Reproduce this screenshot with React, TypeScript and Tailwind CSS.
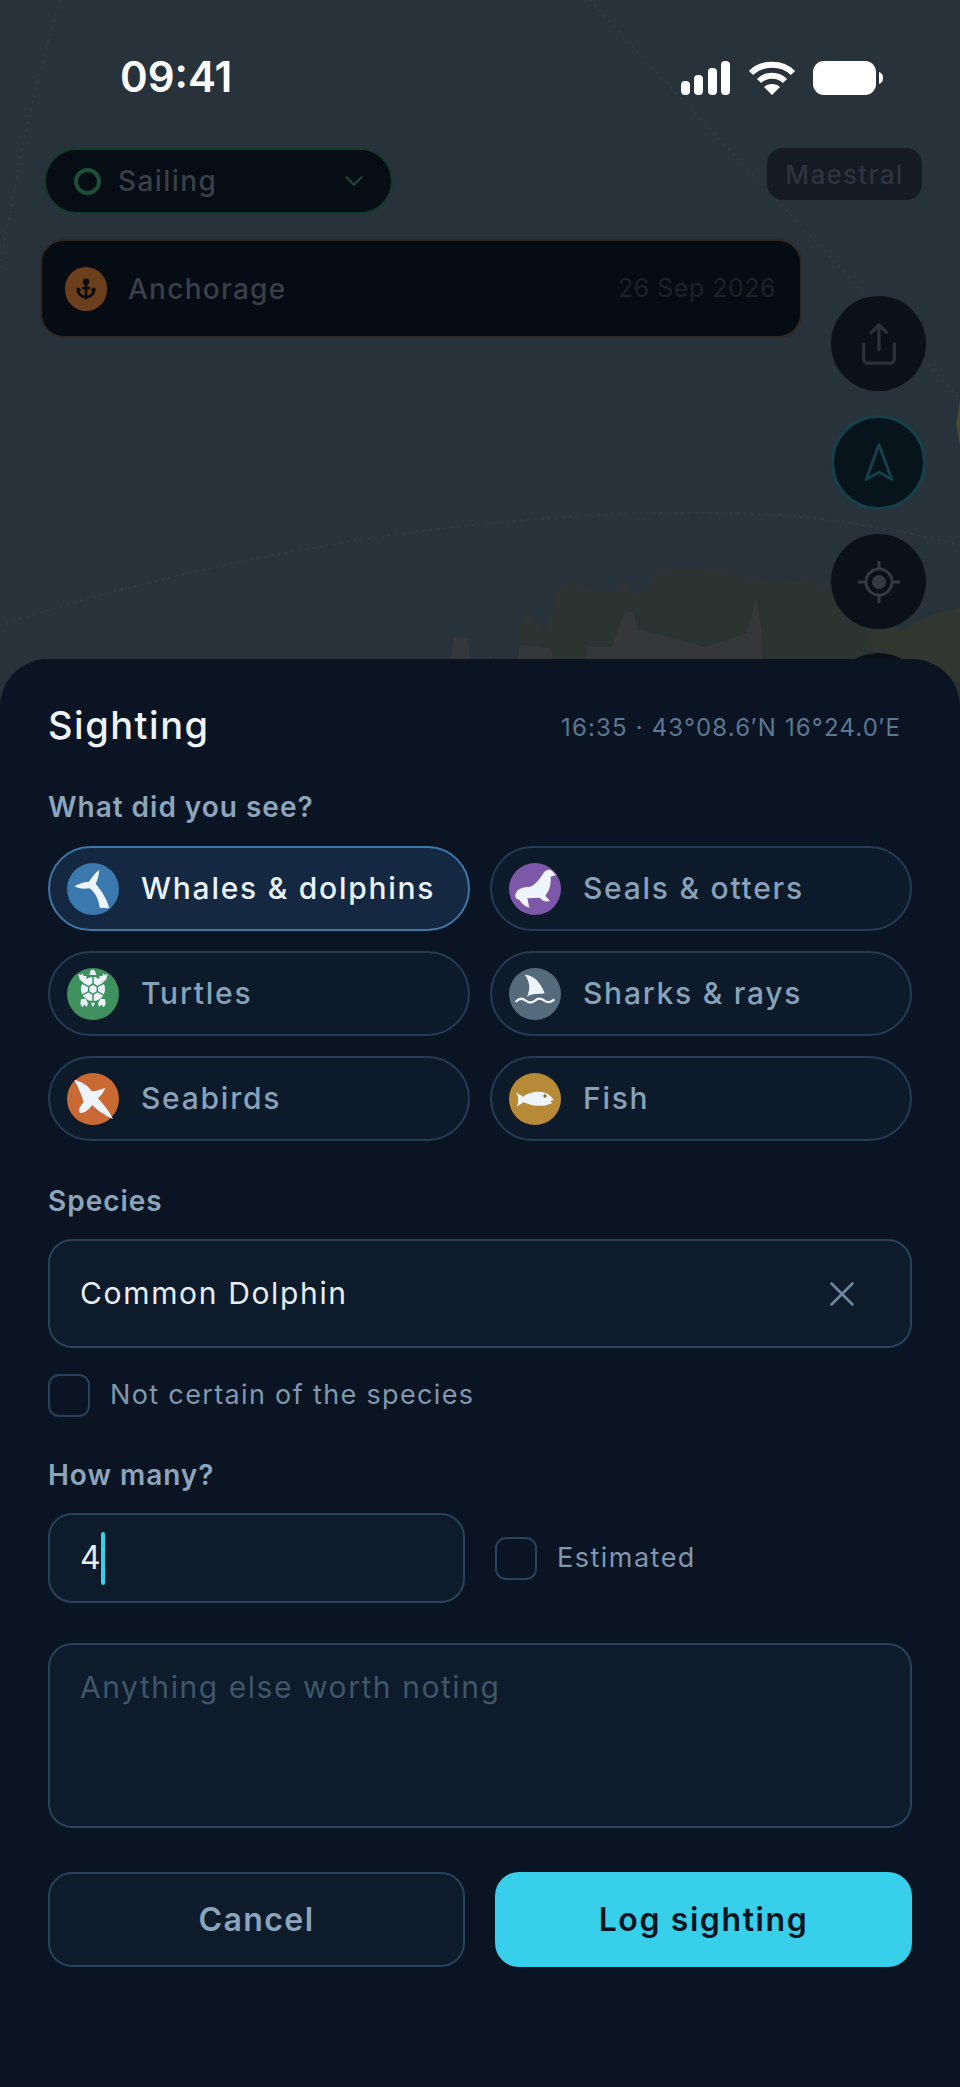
import React from 'react';
import { Anchor, ChevronDown, Navigation2, Share, X } from 'lucide-react';

const IconDisc = ({ color, cx, cy, children }: { color: string; cx: number; cy: number; children: React.ReactNode }) => (
	<svg className="h-[54px] w-[54px] shrink-0" viewBox={`${cx - 81} ${cy - 81} 162 162`}>
		<circle cx={cx} cy={cy} r={78} fill={color} />
		{children}
	</svg>
);

const WHITE = '#edf4fb';

const WhaleIcon = () => (
	<IconDisc color="#3a78ad" cx={128} cy={130}>
		<path
			fill={WHITE}
			d="M72 122C90 112 105 108 116 108C122 98 132 84 147 72C146 88 142 102 136 114C150 130 170 158 177 188L148 186C146 165 135 140 118 128C102 130 85 130 72 122Z"
		/>
	</IconDisc>
);

const SealIcon = () => (
	<IconDisc color="#7d58a8" cx={119} cy={130}>
		<path
			fill={WHITE}
			d="M60 148C62 132 80 124 102 124C122 118 134 98 146 80C154 70 166 70 172 78L182 88L166 93C168 115 162 135 150 150L164 166C150 170 140 165 134 156L96 158L102 186C88 182 78 172 72 162C64 162 59 156 60 148Z"
		/>
	</IconDisc>
);

const TurtleIcon = () => (
	<IconDisc color="#3f9160" cx={128} cy={130}>
		<g fill={WHITE}>
			<path d="M117 73L120 62C123 56 131 56 134 62L138 73Z" />
			<path d="M84 69L92 74L96 68L100 76L108 76L109 88L97 94L88 86Z" />
			<path d="M172 69L164 74L160 68L156 76L148 76L147 88L159 94L168 86Z" />
			<path d="M92 146L106 144L113 158L110 168L102 162L96 170L90 160Z" />
			<path d="M164 146L150 144L143 158L146 168L154 162L160 170L166 160Z" />
			<path d="M122 156L134 156L128 170Z" />
			<circle cx={128} cy={115} r={36} />
		</g>
		<g fill="none" stroke="#3f9160" strokeWidth={4.5}>
			<path d="M128 100L141 108L141 123L128 131L115 123L115 108Z" />
			<path d="M128 100L128 78M141 108L162 97M141 123L162 134M128 131L128 152M115 123L94 134M115 108L94 97" />
		</g>
	</IconDisc>
);

const SharkIcon = () => (
	<IconDisc color="#566a7e" cx={119} cy={130}>
		<path fill={WHITE} d="M88 72C110 72 135 90 148 128C135 132 118 126 95 138C105 115 105 95 88 72Z" />
		<path
			fill="none"
			stroke={WHITE}
			strokeWidth={7}
			strokeLinecap="round"
			d="M63 152C72 142 82 142 91 150C100 157 110 157 119 150C128 142 138 142 147 150C156 157 166 155 175 148"
		/>
	</IconDisc>
);

const SeabirdIcon = () => (
	<IconDisc color="#c96a35" cx={128} cy={115}>
		<path
			fill={WHITE}
			d="M72 58C92 62 112 72 124 92C136 92 150 86 165 82C160 95 152 104 143 113C158 130 176 150 188 175C166 166 142 150 126 133C118 144 104 158 90 157C82 152 86 140 100 124C94 104 84 80 72 58Z"
		/>
	</IconDisc>
);

const FishIcon = () => (
	<IconDisc color="#b68a36" cx={120} cy={115}>
		<path
			fill={WHITE}
			d="M62 95L85 108C100 95 130 90 150 96C162 100 172 110 176 118L165 122L172 126C160 135 125 140 100 130L85 125L65 138C72 125 72 110 62 95Z"
		/>
		<circle cx={150} cy={106} r={5} fill="#8a6a28" />
	</IconDisc>
);

const categories = [
	{ label: 'Whales & dolphins', icon: <WhaleIcon />, active: true },
	{ label: 'Seals & otters', icon: <SealIcon /> },
	{ label: 'Turtles', icon: <TurtleIcon /> },
	{ label: 'Sharks & rays', icon: <SharkIcon /> },
	{ label: 'Seabirds', icon: <SeabirdIcon /> },
	{ label: 'Fish', icon: <FishIcon /> },
];

const CategoryChip = ({ label, icon, active }: { label: string; icon: React.ReactNode; active?: boolean }) => (
	<div
		className={`flex h-[85px] items-center gap-[21px] rounded-full border-2 pl-[16px] text-[30px] font-medium tracking-[0.058em] ${
			active ? 'border-[#3d78a9] bg-[#142842] text-[#eaf2fa]' : 'border-[#263c52] bg-[#0d1a29] text-[#86a2bb]'
		}`}
	>
		{icon}
		<span>{label}</span>
	</div>
);

const Checkbox = () => <div className="h-[43px] w-[42px] shrink-0 rounded-[11px] border-2 border-[#2a4157]" />;

const FieldLabel = ({ children }: { children: React.ReactNode }) => (
	<div className="text-[28px] leading-[34px] font-semibold tracking-[0.035em] text-[#8ba5bc]">{children}</div>
);

const StatusBar = () => (
	<div className="flex h-[148px] items-start justify-between pt-[52px] pr-[77px] pl-[120px]">
		<span className="text-[42px] leading-[50px] font-semibold text-white">09:41</span>
		<div className="flex items-center gap-[17px] pt-[8px]">
			<svg width="50" height="34" viewBox="0 0 50 34" fill="white">
				<rect x="0" y="20" width="9" height="14" rx="4" />
				<rect x="13" y="14" width="9" height="20" rx="4" />
				<rect x="27" y="7" width="9" height="27" rx="4" />
				<rect x="40" y="0" width="9" height="34" rx="4" />
			</svg>
			<svg width="48" height="36" viewBox="0 0 48 36" fill="none" stroke="white" strokeWidth="6">
				<path d="M3 13C14 2 34 2 45 13" />
				<path d="M11 21C18 14 30 14 37 21" />
				<path d="M24 35L16 27C20 23 28 23 32 27Z" fill="white" stroke="none" />
			</svg>
			<svg width="70" height="34" viewBox="0 0 70 34" fill="white">
				<rect x="0" y="0" width="63" height="34" rx="11" />
				<path d="M66 11C69 12 70 14 70 17C70 20 69 22 66 23Z" />
			</svg>
		</div>
	</div>
);

const MapBackdrop = () => (
	<svg className="absolute inset-0 h-full w-full" viewBox="0 0 960 707">
		<g fill="none" stroke="#2f3a44" strokeWidth="2" strokeDasharray="2 5">
			<path d="M0 625C200 560 500 500 780 515C850 520 920 535 960 545" />
			<path d="M590 0C680 100 800 220 960 400" />
			<path d="M60 0C30 100 15 180 0 270" />
		</g>
		<path
			fill="#2c3431"
			d="M512 707L520 627L527 610L545 630L557 590L570 582L588 590L612 593L625 582L637 597L661 570L686 567L716 570L753 580L772 583L808 580L824 590L860 600L900 630L937 613L960 607L960 707Z"
		/>
		<path fill="#323630" d="M860 600L900 630L937 613L960 607L960 680L880 680Z" />
		<path
			fill="#35373b"
			d="M447 707L453 637L468 638L475 707ZM488 707L490 650L497 707ZM514 707L520 645L551 648L560 707ZM582 707L588 647L612 647L625 610L634 613L637 630L655 633L704 647L747 633L756 597L762 633L759 707Z"
		/>
		<path fill="#4a4a2e" d="M956 425L960 400L960 445Z" />
	</svg>
);

const RailButton = ({ children, ring }: { children: React.ReactNode; ring?: boolean }) => (
	<div
		className={`flex h-[95px] w-[95px] items-center justify-center rounded-full ${
			ring ? 'border-[3px] border-[#14404a] bg-[#08141c]' : 'bg-[#0a1119]'
		}`}
	>
		{children}
	</div>
);

const MapLayer = () => (
	<div className="relative h-[707px] overflow-hidden bg-[#28323b]">
		<MapBackdrop />
		<div className="relative">
			<StatusBar />
			<div className="flex items-start justify-between pr-[38px] pl-[44px]">
				<div className="flex h-[66px] w-[349px] items-center rounded-full border-2 border-[#143a2c] bg-[#060d14] pr-[22px] pl-[28px] text-[28px] font-medium tracking-[0.05em] text-[#3a3f48]">
					<div className="h-[27px] w-[27px] rounded-full border-[4px] border-[#1c5039]" />
					<span className="ml-[17px] flex-1">Sailing</span>
					<ChevronDown className="text-[#1c4a3a]" size={30} strokeWidth={1.7} />
				</div>
				<div className="flex h-[52px] w-[155px] items-center justify-center rounded-[16px] bg-[#151b25] text-[26px] font-medium tracking-[0.05em] text-[#2e343f]">
					Maestral
				</div>
			</div>
			<div className="mt-[25px] ml-[40px] flex h-[99px] w-[762px] items-center rounded-[24px] border-2 border-[#322825] bg-[#050c13] pr-[24px] pl-[23px]">
				<div className="flex h-[44px] w-[42px] items-center justify-center rounded-full bg-[#6b3f1c]">
					<Anchor className="text-[#0a0c10]" size={22} strokeWidth={3} />
				</div>
				<span className="ml-[21px] flex-1 text-[28px] font-medium tracking-[0.045em] text-[#3a3f48]">Anchorage</span>
				<span className="text-[25px] tracking-[0.02em] text-[#1c212b]">26 Sep 2026</span>
			</div>
		</div>
		<div className="absolute top-[296px] left-[831px] flex flex-col gap-[24px]">
			<RailButton>
				<Share className="text-[#2a313b]" size={46} strokeWidth={1.7} />
			</RailButton>
			<RailButton ring>
				<Navigation2 className="text-[#14404a]" size={44} strokeWidth={1.6} />
			</RailButton>
			<RailButton>
				<svg width="42" height="42" viewBox="0 0 42 42" fill="none" stroke="#343a44" strokeWidth="3">
					<circle cx="21" cy="21" r="13" />
					<circle cx="21" cy="21" r="7" fill="#343a44" stroke="none" />
					<path d="M21 0V8M21 34V42M0 21H8M34 21H42" />
				</svg>
			</RailButton>
			<RailButton>{null}</RailButton>
		</div>
	</div>
);

const Sheet = () => (
	<div className="relative z-10 -mt-[48px] h-[1428px] rounded-t-[48px] bg-[#0b1422] px-[48px] pt-[44px]">
		<div className="flex items-center justify-between pr-[11px]">
			<h1 className="text-[38px] leading-[44px] font-medium tracking-[0.04em] text-[#eef4fa]">Sighting</h1>
			<span className="mt-[6px] text-[24px] tracking-[0.048em] text-[#5b7792]">16:35 · 43°08.6′N 16°24.0′E</span>
		</div>
		<div className="mt-[43px]">
			<FieldLabel>What did you see?</FieldLabel>
		</div>
		<div className="mt-[22px] grid grid-cols-2 gap-x-[20px] gap-y-[20px]">
			{categories.map(c => (
				<CategoryChip key={c.label} label={c.label} icon={c.icon} active={c.active} />
			))}
		</div>
		<div className="mt-[43px]">
			<FieldLabel>Species</FieldLabel>
		</div>
		<div className="mt-[21px] flex h-[109px] items-center justify-between rounded-[24px] border-2 border-[#2a4258] bg-[#0d1b2a] pr-[47px] pl-[30px]">
			<span className="text-[30px] tracking-[0.055em] text-[#e6eef6]">Common Dolphin</span>
			<X className="text-[#6a86a0]" size={42} strokeWidth={1.5} />
		</div>
		<div className="mt-[26px] flex items-center gap-[20px]">
			<Checkbox />
			<span className="text-[27px] tracking-[0.05em] text-[#8097ad]">Not certain of the species</span>
		</div>
		<div className="mt-[41px]">
			<FieldLabel>How many?</FieldLabel>
		</div>
		<div className="mt-[21px] grid grid-cols-2 gap-x-[30px]">
			<div className="flex h-[90px] items-center rounded-[24px] border-2 border-[#2a4258] bg-[#0d1b2a] pl-[30px]">
				<span className="text-[32px] text-[#e6eef6]">4</span>
				<div className="h-[53px] w-[4px] rounded-full bg-[#37cfe9]" />
			</div>
			<div className="flex items-center gap-[20px]">
				<Checkbox />
				<span className="text-[27px] tracking-[0.055em] text-[#8097ad]">Estimated</span>
			</div>
		</div>
		<div className="mt-[40px] h-[185px] rounded-[24px] border-2 border-[#2a4258] bg-[#0d1b2a] px-[30px] pt-[20px]">
			<span className="text-[30px] tracking-[0.052em] text-[#3f566b]">Anything else worth noting</span>
		</div>
		<div className="mt-[44px] grid grid-cols-2 gap-x-[30px]">
			<button className="h-[95px] rounded-[24px] border-2 border-[#2a4258] bg-[#0d1b2a] text-[32px] font-semibold tracking-[0.045em] text-[#8aa4bd]">
				Cancel
			</button>
			<button className="h-[95px] rounded-[24px] bg-[#37cfe9] text-[32px] font-semibold tracking-[0.05em] text-[#0a1422]">
				Log sighting
			</button>
		</div>
	</div>
);

export default function App() {
	return (
		<div className="h-[2087px] w-[960px] overflow-hidden bg-[#0b1422] font-['Inter',sans-serif]">
			<MapLayer />
			<Sheet />
		</div>
	);
}
